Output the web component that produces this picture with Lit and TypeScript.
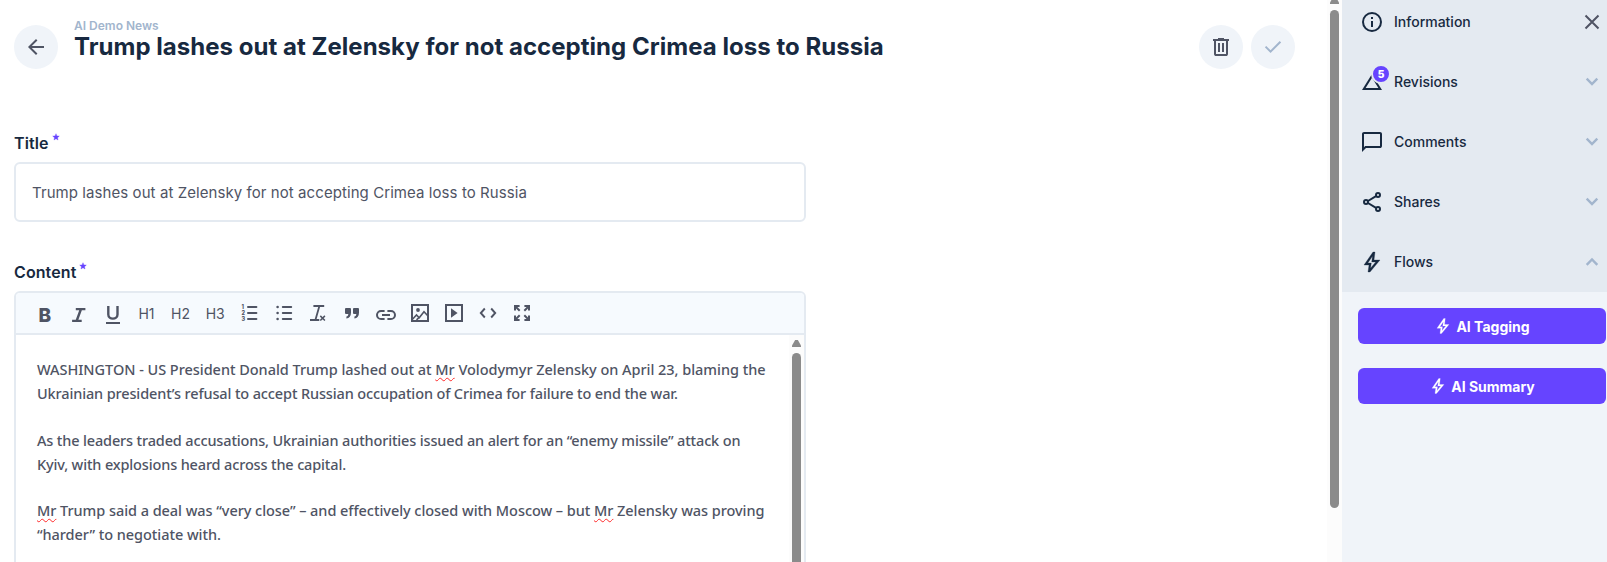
import { LitElement, html, svg, css } from "lit";
import { customElement } from "lit/decorators.js";

const icons = {
  back: svg`<path d="M7.825 13l5.6 5.6L12 20l-8-8 8-8 1.425 1.4-5.6 5.6H20v2z"/>`,
  trash: svg`<path fill-rule="evenodd" d="M7 21q-.825 0-1.412-.587T5 19V6H4V4h5V3h6v1h5v2h-1v13q0 .825-.587 1.413T17 21zM17 6H7v13h10zM9 17h2V8H9zm4 0h2V8h-2z"/>`,
  check: svg`<path d="m9.55 18-5.7-5.7 1.425-1.425L9.55 15.15l9.175-9.175L20.15 7.4z"/>`,
  info: svg`<circle cx="12" cy="12" r="9" fill="none" stroke="currentColor" stroke-width="2"/><path d="M11 11h2v6h-2zM11 7h2v2h-2z"/>`,
  revisions: svg`<path d="M12 7.77 18.39 18H5.61L12 7.77M12 4 2 20h20z"/>`,
  comments: svg`<path fill-rule="evenodd" d="M2 22V4q0-.825.588-1.412T4 2h16q.825 0 1.413.588T22 4v12q0 .825-.587 1.413T20 18H6zm3.15-6H20V4H4v13.125z"/>`,
  shares: svg`<g fill="none" stroke="currentColor" stroke-width="2"><circle cx="18" cy="5" r="2"/><circle cx="6" cy="12" r="2"/><circle cx="18" cy="19" r="2"/><path d="M8 11l8-4.8M8 13l8 4.8"/></g>`,
  bolt: svg`<path fill-rule="evenodd" d="m10.55 18.2 5.175-6.2h-4l.725-5.675L7.825 13H11.3zM8 22l1-7H4l9-13h2l-1 8h6L10 22z" stroke="currentColor" stroke-width=".3"/>`,
  close: svg`<path d="M5.5 5.5l13 13M18.5 5.5l-13 13" fill="none" stroke="currentColor" stroke-width="2"/>`,
  down: svg`<path d="M6.7 8.7L12 14l5.3-5.3" fill="none" stroke="currentColor" stroke-width="2.4"/>`,
  up: svg`<path d="M6.7 14.8L12 9.5l5.3 5.3" fill="none" stroke="currentColor" stroke-width="2.4"/>`,
  star: svg`<path d="M12 17.27 18.18 21l-1.64-7.03L22 9.24l-7.19-.61L12 2 9.19 8.63 2 9.24l5.46 4.73L5.82 21z" stroke="currentColor"/>`,
};

const tools = [
  svg`<text x="5.4" y="20.7" font-size="19" font-weight="800">B</text>`,
  svg`<path d="M8.8 8.1h9.6M5.1 19.9h9.6M14 8L9.6 20" fill="none" stroke="currentColor" stroke-width="2.4"/>`,
  svg`<path d="M7.3 5v8.4c0 5.6 9.2 5.6 9.2 0V5" fill="none" stroke="currentColor" stroke-width="2.4"/><path d="M5 21h14v2H5z"/>`,
  svg`<text class="heading" x="11.5" y="17.8" text-anchor="middle">H1</text>`,
  svg`<text class="heading" x="11.5" y="17.8" text-anchor="middle">H2</text>`,
  svg`<text class="heading" x="12.2" y="17.8" text-anchor="middle">H3</text>`,
  svg`<path d="M11 6h8.4M11 12h8.4M11 18h8.4" fill="none" stroke="currentColor" stroke-width="2" stroke-linecap="round"/><g class="tiny"><text x="4.4" y="8">1</text><text x="4.4" y="14">2</text><text x="4.4" y="20">3</text></g>`,
  svg`<path d="M11.8 6h8.4M11.8 12h8.4M11.8 18h8.4" fill="none" stroke="currentColor" stroke-width="2" stroke-linecap="round"/><circle cx="6.6" cy="6" r="1.3"/><circle cx="6.6" cy="12" r="1.3"/><circle cx="6.6" cy="18" r="1.3"/>`,
  svg`<path d="M8.4 5h10.8M5 19h9.3M14.4 5L10.4 19" fill="none" stroke="currentColor" stroke-width="1.8"/><path d="M15.3 14.9l4.6 4.6M19.9 14.9l-4.6 4.6" fill="none" stroke="currentColor" stroke-width="1.5"/>`,
  svg`<path d="M7 7h4q1 0 1 1v3.4c0 3.6-1.6 5.6-4.6 6.1v-1.9c1.2-.5 1.9-1.4 1.9-2.7H7q-1 0-1-1V8q0-1 1-1zM15 7h4q1 0 1 1v3.4c0 3.6-1.6 5.6-4.6 6.1v-1.9c1.2-.5 1.9-1.4 1.9-2.7H15q-1 0-1-1V8q0-1 1-1z"/>`,
  svg`<path d="M11.6 9.9H8.1a4 4 0 0 0 0 8.2h3.5M14.4 9.9h3.5a4 4 0 0 1 0 8.2h-3.5M9 14h8" fill="none" stroke="currentColor" stroke-width="2"/>`,
  svg`<rect x="5" y="4" width="16" height="16" fill="none" stroke="currentColor" stroke-width="2"/><circle cx="11" cy="9" r="1.9"/><path d="M5.5 18.2l4-4.2 2.7 2.7 4.8-5.9 4 4.2M9.5 18.8l3-2.6" fill="none" stroke="currentColor" stroke-width="1.6"/>`,
  svg`<rect x="5" y="4" width="16" height="16" fill="none" stroke="currentColor" stroke-width="2"/><path d="M10 7.3v9.4l6.6-4.7z"/>`,
  svg`<path d="M9.8 7.5L5.8 12l4 4.5M16.2 7.5l4 4.5-4 4.5" fill="none" stroke="currentColor" stroke-width="1.9"/>`,
  svg`<path d="M5 4h5.6v2H8.4l3 3L10 10.4l-3-3v2.2H5zM21 4h-5.6v2h2.2l-3 3L16 10.4l3-3v2.2h2zM5 20h5.6v-2H8.4l3-3L10 13.6l-3 3v-2.2H5zM21 20h-5.6v-2h2.2l-3-3L16 13.6l3 3v-2.2h2z"/>`,
];

const glyph = (shape: unknown, cls = "") =>
  html`<svg class="icon ${cls}" viewBox="0 0 24 24" fill="currentColor">${shape}</svg>`;

const mr = html`<span class="typo">Mr</span>`;

@customElement("side-row")
class SideRow extends LitElement {
  static properties = { label: {}, icon: {}, end: {}, count: {} };
  declare label: string;
  declare icon: keyof typeof icons;
  declare end: keyof typeof icons;
  declare count: string;
  static styles = css`
    :host { display: flex; align-items: center; height: 60px; padding: 0 3px 0 18px; color: #172940; }
    .icon { width: 24px; height: 24px; flex: none; display: block; }
    .lead { position: relative; width: 24px; margin-right: 10px; }
    .badge { position: absolute; left: 11px; top: -6px; width: 16px; height: 16px; border: 2px solid #e4eaf1; border-radius: 50%; background: #6644ff; color: #fff; font-size: 10px; font-weight: 900; line-height: 16px; text-align: center; }
    .label { flex: 1; font-size: 14px; font-weight: 500; line-height: 24px; }
    .muted { color: #a2b5cd; }
    .dark { color: #4f5464; }
  `;
  render() {
    return html`
      <div class="lead">${glyph(icons[this.icon])}${this.count ? html`<span class="badge">${this.count}</span>` : ""}</div>
      <span class="label">${this.label}</span>
      ${glyph(icons[this.end], this.end === "close" ? "dark" : "muted")}
    `;
  }
}

@customElement("app-root")
class AppRoot extends LitElement {
  static styles = css`
    :host { display: flex; height: 562px; overflow: hidden; background: #fff; color: #4f5464; font-family: Inter, sans-serif; }
    * { box-sizing: border-box; }
    .icon { width: 24px; height: 24px; flex: none; display: block; overflow: visible; }
    .page { width: 1327px; flex: none; padding: 0 32px 0 14px; }
    .header { display: flex; align-items: center; gap: 8px; height: 94px; }
    .round { display: grid; place-items: center; width: 44px; height: 44px; border-radius: 50%; background: #f0f4f9; }
    .round.off { color: #a2b5cd; }
    .heads { flex: 1; padding: 0 0 16px 8px; }
    .crumb { font-size: 12px; font-weight: 600; line-height: 14px; color: #a2b5cd; }
    h1 { margin: 1px 0 0; font-size: 24px; font-weight: 700; line-height: 26px; letter-spacing: 0.03px; color: #172940; white-space: nowrap; }
    .form { width: 792px; padding-top: 37px; }
    .label { display: flex; gap: 3px; height: 24px; font-size: 16px; font-weight: 600; line-height: 24px; letter-spacing: 0.1px; color: #172940; }
    .label .star { width: 8px; height: 8px; color: #6644ff; margin-top: 2px; }
    .input { height: 60px; margin: 7px 0 38px; padding: 1px 16px 0; border: 2px solid #e4eaf1; border-radius: 6px; font-size: 15px; line-height: 56px; letter-spacing: 0.075px; }
    .editor { margin-top: 7px; height: 400px; border: 2px solid #e4eaf1; border-radius: 6px; overflow: hidden; }
    .tools { display: flex; align-items: center; height: 42px; padding-left: 12px; background: #f6fafe; border-bottom: 2px solid #e4eaf1; }
    .tool { width: 34px; display: grid; place-items: center; }
    .heading { font-size: 14px; }
    .tiny { font-size: 5.5px; font-weight: 800; }
    .body { display: flex; height: 356px; }
    .text { flex: 1; min-width: 0; padding: 22px 0 0 21px; font-family: "Noto Sans", sans-serif; font-size: 14.5px; line-height: 24px; font-weight: 500; white-space: nowrap; }
    p { margin: 0 0 22.5px; }
    .line { display: block; height: 24px; }
    .l1 { letter-spacing: -0.035px; }
    .l5, .l6 { letter-spacing: -0.05px; }
    .l2 { letter-spacing: -0.134px; }
    .l3, .l4 { letter-spacing: -0.15px; }
    .typo { text-decoration: underline wavy #ff2a2a 1.3px; text-underline-offset: 2px; text-decoration-skip-ink: none; }
    .bar { width: 15px; flex: none; display: flex; flex-direction: column; align-items: center; background: #fcfcfc; }
    .arrow { width: 9px; height: 7px; flex: none; background: #8b8b8b; clip-path: polygon(35% 0, 65% 0, 100% 80%, 100% 100%, 0 100%, 0 80%); }
    .thumb { width: 9px; flex: none; border-radius: 5px; background: #8b8b8b; }
    .body .arrow { margin-top: 5px; }
    .body .thumb { margin-top: 6px; height: 400px; }
    .main-bar .arrow { margin-top: -3px; }
    .main-bar .thumb { margin-top: 6px; height: 498px; }
    .side { flex: 1; background: #f0f4f9; }
    .rows { margin-top: -8px; background: #e4eaf1; }
    .flows { display: grid; gap: 24px; padding: 16px 1px 0 16px; }
    .action { display: flex; align-items: center; justify-content: center; gap: 4px; height: 36px; border-radius: 6px; background: #6644ff; color: #fff; font-size: 14px; font-weight: 650; }
    .action .icon { width: 18px; height: 18px; }
  `;
  render() {
    return html`
      <main class="page">
        <header class="header">
          <div class="round">${glyph(icons.back)}</div>
          <div class="heads">
            <div class="crumb">AI Demo News</div>
            <h1>Trump lashes out at Zelensky for not accepting Crimea loss to Russia</h1>
          </div>
          <div class="round">${glyph(icons.trash)}</div>
          <div class="round off">${glyph(icons.check)}</div>
        </header>
        <section class="form">
          <div class="label">Title ${glyph(icons.star, "star")}</div>
          <div class="input">Trump lashes out at Zelensky for not accepting Crimea loss to Russia</div>
          <div class="label">Content ${glyph(icons.star, "star")}</div>
          <div class="editor">
            <div class="tools">${tools.map((t) => html`<div class="tool">${glyph(t)}</div>`)}</div>
            <div class="body">
              <div class="text">
                <p>
                  <span class="line l1">WASHINGTON - US President Donald Trump lashed out at ${mr} Volodymyr Zelensky on April 23, blaming the</span>
                  <span class="line l2">Ukrainian president’s refusal to accept Russian occupation of Crimea for failure to end the war.</span>
                </p>
                <p>
                  <span class="line l3">As the leaders traded accusations, Ukrainian authorities issued an alert for an “enemy missile” attack on</span>
                  <span class="line l4">Kyiv, with explosions heard across the capital.</span>
                </p>
                <p>
                  <span class="line l5">${mr} Trump said a deal was “very close” – and effectively closed with Moscow – but ${mr} Zelensky was proving</span>
                  <span class="line l6">“harder” to negotiate with.</span>
                </p>
              </div>
              <div class="bar"><div class="arrow"></div><div class="thumb"></div></div>
            </div>
          </div>
        </section>
      </main>
      <div class="bar main-bar"><div class="arrow"></div><div class="thumb"></div></div>
      <aside class="side">
        <div class="rows">
          <side-row label="Information" icon="info" end="close"></side-row>
          <side-row label="Revisions" icon="revisions" end="down" count="5"></side-row>
          <side-row label="Comments" icon="comments" end="down"></side-row>
          <side-row label="Shares" icon="shares" end="down"></side-row>
          <side-row label="Flows" icon="bolt" end="up"></side-row>
        </div>
        <div class="flows">
          <div class="action">${glyph(icons.bolt)}<span>AI Tagging</span></div>
          <div class="action">${glyph(icons.bolt)}<span>AI Summary</span></div>
        </div>
      </aside>
    `;
  }
}
